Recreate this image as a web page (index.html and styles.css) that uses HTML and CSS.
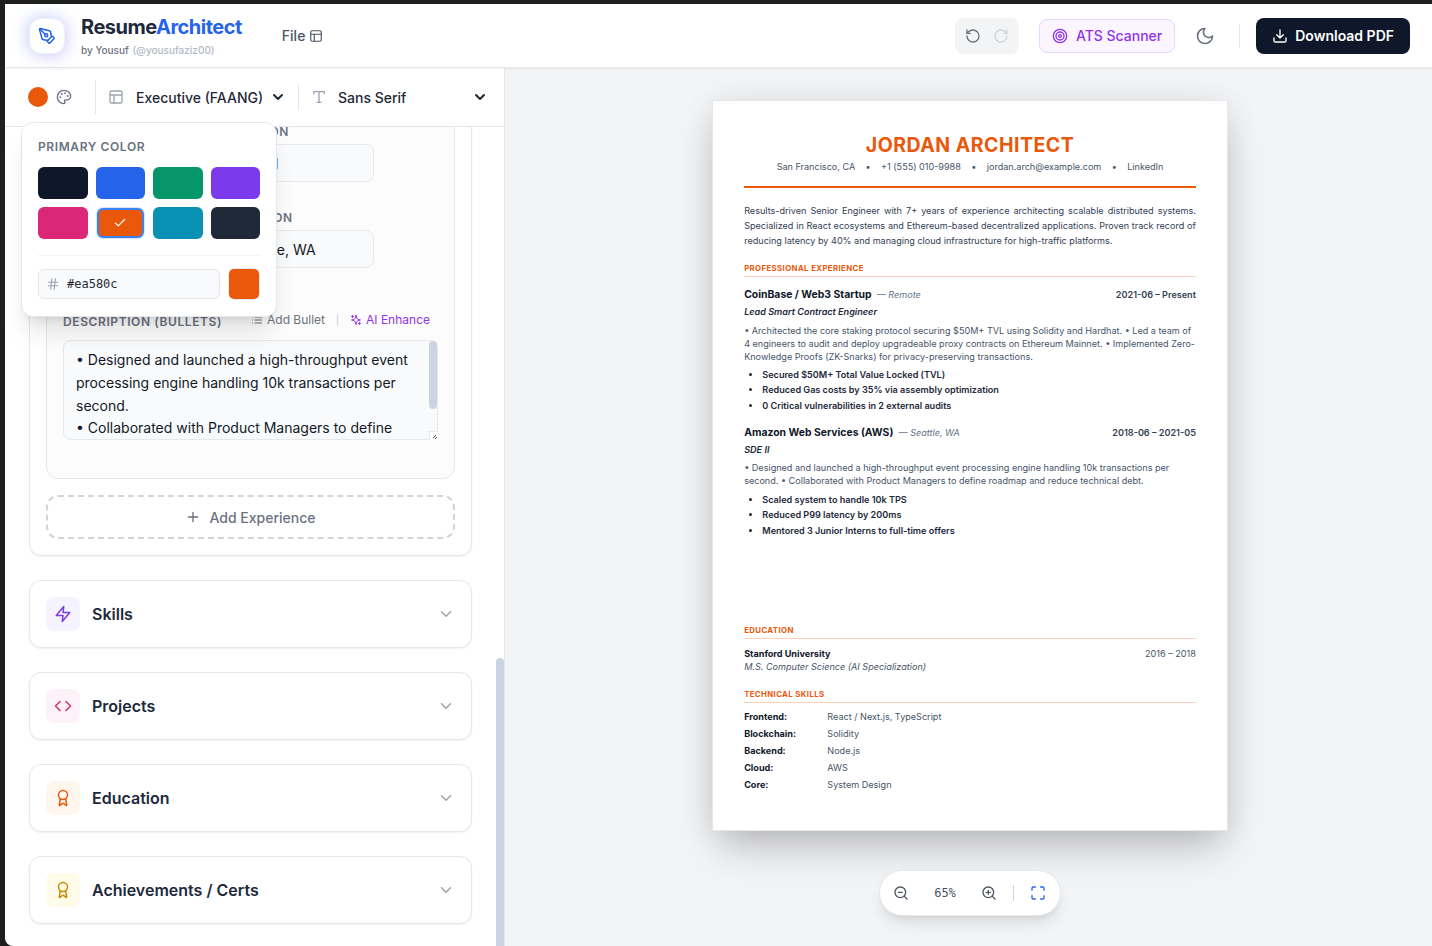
FILE: index.html
```html
<!DOCTYPE html>
<html lang="en">
<head>
<meta charset="utf-8">
<title>ResumeArchitect</title>
<meta name="viewport" content="width=device-width, initial-scale=1">
<link rel="stylesheet" href="styles.css">
</head>
<body>
<div class="app">
  <header class="topbar">
    <span class="logo"><svg class="icon i18" viewBox="0 0 24 24"><path d="M15.707 21.293a1 1 0 0 1-1.414 0l-1.586-1.586a1 1 0 0 1 0-1.414l5.586-5.586a1 1 0 0 1 1.414 0l1.586 1.586a1 1 0 0 1 0 1.414z"/><path d="m18 13-1.375-6.874a1 1 0 0 0-.746-.776L3.235 2.028a1 1 0 0 0-1.207 1.207L5.35 15.879a1 1 0 0 0 .776.746L13 18"/><path d="m2.3 2.3 7.286 7.286"/><circle cx="11" cy="11" r="2"/></svg></span>
    <div class="brand">
      <h1 class="brand-name">Resume<span>Architect</span></h1>
      <p class="brand-by">by Yousuf <a href="#author">(@yousufaziz00)</a></p>
    </div>
    <button class="file-menu" type="button">File <svg class="icon i14" viewBox="0 0 24 24"><rect x="3" y="3" width="18" height="18" rx="2"/><path d="M3 9h18M9 21V9"/></svg></button>
    <div class="actions">
      <div class="history">
        <button type="button" aria-label="Undo"><svg class="icon i16" viewBox="0 0 24 24"><path d="M3 12a9 9 0 1 0 9-9 9.75 9.75 0 0 0-6.74 2.74L3 8"/><path d="M3 3v5h5"/></svg></button>
        <button type="button" aria-label="Redo" disabled><svg class="icon i16" viewBox="0 0 24 24"><path d="M21 12a9 9 0 1 1-9-9c2.520 0 4.930 1 6.740 2.740L21 8"/><path d="M21 3v5h-5"/></svg></button>
      </div>
      <button class="ats" type="button"><svg class="icon i16" viewBox="0 0 24 24"><circle cx="12" cy="12" r="10"/><circle cx="12" cy="12" r="6"/><circle cx="12" cy="12" r="2"/></svg>ATS Scanner</button>
      <button class="theme" type="button" aria-label="Dark mode"><svg class="icon i20" viewBox="0 0 24 24"><path d="M12 3a6 6 0 0 0 9 9 9 9 0 1 1-9-9Z"/></svg></button>
      <span class="bar-rule"></span>
      <button class="download" type="button"><svg class="icon i16" viewBox="0 0 24 24"><path d="M21 15v4a2 2 0 0 1-2 2H5a2 2 0 0 1-2-2v-4"/><path d="m7 10 5 5 5-5M12 15V3"/></svg>Download PDF</button>
    </div>
  </header>

  <main class="workspace">
    <aside class="editor">
      <div class="toolbar">
        <div class="color-tool">
          <button class="color-button" type="button" aria-label="Theme color" aria-expanded="true"><span class="dot"></span><svg class="icon i16" viewBox="0 0 24 24"><circle cx="13.500" cy="6.500" r=".5"/><circle cx="17.500" cy="10.500" r=".5"/><circle cx="8.500" cy="7.500" r=".5"/><circle cx="6.500" cy="12.500" r=".5"/><path d="M12 2C6.500 2 2 6.500 2 12s4.500 10 10 10c.926 0 1.648-.746 1.648-1.688 0-.437-.18-.835-.437-1.125-.29-.289-.438-.652-.438-1.125a1.640 1.640 0 0 1 1.668-1.668h1.996c3.051 0 5.555-2.503 5.555-5.554C21.965 6.012 17.461 2 12 2z"/></svg></button>
          <div class="color-pop">
            <h2 class="caps">Primary Color</h2>
            <div class="swatches">
              <button type="button" class="sw navy" aria-label="Navy"></button>
              <button type="button" class="sw blue" aria-label="Blue"></button>
              <button type="button" class="sw green" aria-label="Green"></button>
              <button type="button" class="sw violet" aria-label="Violet"></button>
              <button type="button" class="sw pink" aria-label="Pink"></button>
              <button type="button" class="sw orange selected" aria-label="Orange" aria-pressed="true"><svg class="icon i14" viewBox="0 0 24 24"><path d="M20 6 9 17l-5-5"/></svg></button>
              <button type="button" class="sw cyan" aria-label="Cyan"></button>
              <button type="button" class="sw slate" aria-label="Slate"></button>
            </div>
            <div class="custom">
              <label class="hex"><svg class="icon i14" viewBox="0 0 24 24"><path d="M4 9h16M4 15h16M10 3 8 21M16 3l-2 18"/></svg><input type="text" value="#ea580c" aria-label="Hex color"></label>
              <input class="picker" type="color" value="#ea580c" aria-label="Pick color">
            </div>
          </div>
        </div>
        <span class="rule tall"></span>
        <label class="pick template"><svg class="icon i16 faint" viewBox="0 0 24 24"><rect x="3" y="3" width="18" height="18" rx="2"/><path d="M3 9h18M9 21V9"/></svg>
          <select aria-label="Template"><option>Executive (FAANG)</option></select>
          <svg class="icon caret" viewBox="0 0 10 10"><path d="m1 3 4 4 4-4"/></svg></label>
        <span class="rule"></span>
        <label class="pick font"><svg class="icon i16 faint" viewBox="0 0 24 24"><path d="M4 7V4h16v3M9 20h6M12 4v16"/></svg>
          <select aria-label="Font"><option>Sans Serif</option></select>
          <svg class="icon caret" viewBox="0 0 10 10"><path d="m1 3 4 4 4-4"/></svg></label>
      </div>

      <div class="scroller">
        <div class="sections">
          <section class="card open">
            <div class="entry">
              <div class="fields">
                <div class="field"><label class="caps" for="company">Company</label><input id="company" type="text" value="Amazon"></div>
                <div class="field"><label class="caps" for="position">Position</label><input id="position" type="text" value="SDE II"></div>
                <div class="field"><label class="caps" for="dates">Duration</label><input id="dates" type="text" value="2018-06"></div>
                <div class="field"><label class="caps" for="location">Location</label><input id="location" type="text" value="Seattle, WA"></div>
              </div>
              <div class="desc-head">
                <label class="caps" for="desc">Description (Bullets)</label>
                <div class="desc-tools">
                  <button type="button"><svg class="icon i12" viewBox="0 0 24 24"><path d="M8 6h13M8 12h13M8 18h13M3 6h.01M3 12h.01M3 18h.01"/></svg>Add Bullet</button>
                  <span class="tiny-rule"></span>
                  <button type="button" class="ai"><svg class="icon i12" viewBox="0 0 24 24"><path d="m12 3-1.912 5.813a2 2 0 0 1-1.275 1.275L3 12l5.813 1.912a2 2 0 0 1 1.275 1.275L12 21l1.912-5.813a2 2 0 0 1 1.275-1.275L21 12l-5.813-1.912a2 2 0 0 1-1.275-1.275L12 3ZM5 3v4M19 17v4M3 5h4M17 19h4"/></svg>AI Enhance</button>
                </div>
              </div>
              <div class="desc-box">
                <textarea id="desc">• Designed and launched a high-throughput event processing engine handling 10k transactions per second.
• Collaborated with Product Managers to define roadmap and reduce technical debt.</textarea>
                <span class="desc-thumb"></span>
                <svg class="grip" viewBox="0 0 9 9"><path d="M0 9V0h9" class="edge"/><path d="M4 7 7 4M6 8l2-2"/></svg>
              </div>
            </div>
            <button class="add" type="button"><svg class="icon i16" viewBox="0 0 24 24"><path d="M5 12h14M12 5v14"/></svg>Add Experience</button>
          </section>
          <button class="card row" type="button"><span class="tile t-violet"><svg class="icon i18" viewBox="0 0 24 24"><path d="M13 2 3 14h9l-1 8 10-12h-9l1-8z"/></svg></span><span class="row-title">Skills</span><svg class="icon i18 faint" viewBox="0 0 24 24"><path d="m6 9 6 6 6-6"/></svg></button>
          <button class="card row" type="button"><span class="tile t-pink"><svg class="icon i18" viewBox="0 0 24 24"><path d="m16 18 6-6-6-6M8 6l-6 6 6 6"/></svg></span><span class="row-title">Projects</span><svg class="icon i18 faint" viewBox="0 0 24 24"><path d="m6 9 6 6 6-6"/></svg></button>
          <button class="card row" type="button"><span class="tile t-orange"><svg class="icon i18" viewBox="0 0 24 24"><circle cx="12" cy="8" r="6"/><path d="m15.477 12.890 1.515 8.526a.5.5 0 0 1-.81.47l-3.580-2.687a1 1 0 0 0-1.197 0l-3.586 2.686a.5.5 0 0 1-.81-.469l1.514-8.526"/></svg></span><span class="row-title">Education</span><svg class="icon i18 faint" viewBox="0 0 24 24"><path d="m6 9 6 6 6-6"/></svg></button>
          <button class="card row" type="button"><span class="tile t-yellow"><svg class="icon i18" viewBox="0 0 24 24"><circle cx="12" cy="8" r="6"/><path d="m15.477 12.890 1.515 8.526a.5.5 0 0 1-.81.47l-3.580-2.687a1 1 0 0 0-1.197 0l-3.586 2.686a.5.5 0 0 1-.81-.469l1.514-8.526"/></svg></span><span class="row-title">Achievements / Certs</span><svg class="icon i18 faint" viewBox="0 0 24 24"><path d="m6 9 6 6 6-6"/></svg></button>
        </div>
        <div class="rail"><span class="thumb"></span></div>
      </div>
    </aside>

    <section class="preview">
      <article class="sheet">
        <header class="sheet-head">
          <h2>JORDAN ARCHITECT</h2>
          <p class="contact"><span>San Francisco, CA</span><span>•</span><span>+1 (555) 010-9988</span><span>•</span><span>jordan.arch@example.com</span><span>•</span><span>LinkedIn</span></p>
        </header>
        <p class="summary">Results-driven Senior Engineer with 7+ years of experience architecting scalable distributed systems. Specialized in React ecosystems and Ethereum-based decentralized applications. Proven track record of reducing latency by 40% and managing cloud infrastructure for high-traffic platforms.</p>

        <section class="part">
          <h3>PROFESSIONAL EXPERIENCE</h3>
          <div class="job">
            <div class="job-line"><strong>CoinBase / Web3 Startup</strong><em>— Remote</em><span class="when">2021-06 – Present</span></div>
            <p class="role">Lead Smart Contract Engineer</p>
            <p class="text">• Architected the core staking protocol securing $50M+ TVL using Solidity and Hardhat. • Led a team of 4 engineers to audit and deploy upgradeable proxy contracts on Ethereum Mainnet. • Implemented Zero-Knowledge Proofs (ZK-Snarks) for privacy-preserving transactions.</p>
            <ul><li>Secured $50M+ Total Value Locked (TVL)</li><li>Reduced Gas costs by 35% via assembly optimization</li><li>0 Critical vulnerabilities in 2 external audits</li></ul>
          </div>
          <div class="job">
            <div class="job-line"><strong>Amazon Web Services (AWS)</strong><em>— Seattle, WA</em><span class="when">2018-06 – 2021-05</span></div>
            <p class="role">SDE II</p>
            <p class="text">• Designed and launched a high-throughput event processing engine handling 10k transactions per second. • Collaborated with Product Managers to define roadmap and reduce technical debt.</p>
            <ul><li>Scaled system to handle 10k TPS</li><li>Reduced P99 latency by 200ms</li><li>Mentored 3 Junior Interns to full-time offers</li></ul>
          </div>
        </section>

        <section class="part after-break">
          <h3>EDUCATION</h3>
          <div class="school"><strong>Stanford University</strong><span>2016 – 2018</span></div>
          <p class="degree">M.S. Computer Science (AI Specialization)</p>
        </section>

        <section class="part">
          <h3>TECHNICAL SKILLS</h3>
          <dl class="skills">
            <dt>Frontend:</dt><dd>React / Next.js, TypeScript</dd>
            <dt>Blockchain:</dt><dd>Solidity</dd>
            <dt>Backend:</dt><dd>Node.js</dd>
            <dt>Cloud:</dt><dd>AWS</dd>
            <dt>Core:</dt><dd>System Design</dd>
          </dl>
        </section>
      </article>

      <div class="zoombar">
        <button type="button" aria-label="Zoom out"><svg class="icon i16" viewBox="0 0 24 24"><circle cx="11" cy="11" r="8"/><path d="m21 21-4.350-4.350M8 11h6"/></svg></button>
        <span class="level">65%</span>
        <button type="button" aria-label="Zoom in"><svg class="icon i16" viewBox="0 0 24 24"><circle cx="11" cy="11" r="8"/><path d="m21 21-4.350-4.350M8 11h6M11 8v6"/></svg></button>
        <span class="zoom-rule"></span>
        <button type="button" class="fit" aria-label="Fit to screen"><svg class="icon i16" viewBox="0 0 24 24"><path d="M8 3H5a2 2 0 0 0-2 2v3M21 8V5a2 2 0 0 0-2-2h-3M3 16v3a2 2 0 0 0 2 2h3M16 21h3a2 2 0 0 0 2-2v-3"/></svg></button>
      </div>
    </section>
  </main>
</div>
</body>
</html>
```
FILE: styles.css
```css
* { box-sizing: border-box; }
body {
  margin: 0;
  height: 100vh;
  padding: 4px 0 0 5px;
  background: #1e201e;
  color: #1e293b;
  font-family: Inter, "Liberation Sans", sans-serif;
  font-size: 14px;
}
h1, h2, h3, p, ul, dl, dd { margin: 0; padding: 0; }
button, input, select, textarea { font: inherit; color: inherit; }
button { padding: 0; border: 0; background: none; cursor: pointer; }
a { color: inherit; text-decoration: none; }

.icon { flex: none; fill: none; stroke: currentColor; stroke-width: 2; stroke-linecap: round; stroke-linejoin: round; }
.i12 { width: 12px; height: 12px; }
.i14 { width: 14px; height: 14px; }
.i16 { width: 16px; height: 16px; }
.i18 { width: 18px; height: 18px; }
.i20 { width: 20px; height: 20px; }
.faint { color: #9ca3af; }
.caps { font-size: 12px; line-height: 16px; font-weight: 600; letter-spacing: 0.6px; text-transform: uppercase; color: #6b7280; }

.app { display: flex; flex-direction: column; height: 100%; overflow: hidden; background: #fff; border-bottom-left-radius: 8px; }

/* Top bar */
.topbar { position: relative; z-index: 3; flex: none; display: flex; align-items: center; height: 64px; padding: 0 22px 0 24px; background: #fff; border-bottom: 1px solid #e5e7eb; box-shadow: 0 1px 2px rgba(0, 0, 0, 0.05); }
.logo { display: grid; place-items: center; width: 36px; height: 36px; border: 1px solid #eef0f4; border-radius: 12px; background: #fff; color: #2563eb; box-shadow: -3px -2px 16px rgba(59, 130, 246, 0.22), 3px 3px 16px rgba(124, 58, 237, 0.18); }
.brand { margin-left: 16px; }
.brand-name { font-size: 20px; line-height: 26px; font-weight: 700; letter-spacing: -0.5px; }
.brand-name span { color: #2563eb; }
.brand-by { margin-top: 2px; font-size: 10px; line-height: 16px; font-weight: 500; color: #6b7280; }
.brand-by a { margin-left: 1px; color: #b3b9c4; }
.file-menu { display: flex; align-items: center; gap: 4px; margin-left: 40px; font-weight: 500; color: #4b5563; }
.actions { display: flex; align-items: center; margin-left: auto; }
.history { display: flex; padding: 4px; border-radius: 8px; background: #f3f4f6; color: #6b7280; }
.history button { display: grid; place-items: center; width: 28px; height: 28px; }
.history button:disabled { color: #d1d5db; }
.ats { display: flex; align-items: center; gap: 8px; height: 34px; margin-left: 20px; padding: 0 12px; border: 1px solid #e9d5ff; border-radius: 8px; background: #faf5ff; font-weight: 500; color: #9333ea; }
.theme { display: grid; place-items: center; width: 36px; height: 36px; margin-left: 12px; color: #6b7280; }
.bar-rule { width: 1px; height: 24px; margin: 0 16px; background: #e5e7eb; }
.download { display: flex; align-items: center; gap: 7px; height: 36px; padding: 0 16px; border-radius: 8px; background: #0f172a; font-weight: 600; color: #fff; }

.workspace { flex: 1; min-height: 0; display: flex; }

/* Editor column */
.editor { flex: none; display: flex; flex-direction: column; width: 500px; border-right: 1px solid #e5e7eb; }
.toolbar { position: relative; z-index: 2; flex: none; display: flex; align-items: center; height: 59px; padding: 0 16px 0 23px; border-bottom: 1px solid #e5e7eb; background: #fff; }
.color-button { display: flex; align-items: center; gap: 8px; color: #6b7280; }
.dot { width: 20px; height: 20px; border-radius: 50%; background: #ea580c; }
.rule { flex: none; width: 1px; height: 26px; margin: 0 12px; background: #e5e7eb; }
.rule.tall { height: 34px; margin-left: 23px; }
.pick { position: relative; display: flex; align-items: center; gap: 12px; font-weight: 500; color: #1f2937; }
.pick select { appearance: none; width: 100%; padding: 0 24px 0 0; border: 0; background: none; outline: 0; cursor: pointer; }
.template { width: 178px; }
.font { flex: 1; gap: 11px; }
.caret { position: absolute; right: 3px; top: 50%; width: 10px; height: 10px; margin-top: -5px; pointer-events: none; }

.color-pop { position: absolute; top: 54px; left: 16px; width: 256px; padding: 16px; border: 1px solid #e5e7eb; border-radius: 12px; background: #fff; box-shadow: 0 20px 25px -5px rgba(0, 0, 0, 0.1), 0 8px 10px -6px rgba(0, 0, 0, 0.1); }
.swatches { display: grid; grid-template-columns: repeat(4, 1fr); gap: 8px; margin-top: 12px; }
.sw { height: 32px; border-radius: 6px; }
.navy { background: #0f172a; }
.blue { background: #2563eb; }
.green { background: #059669; }
.violet { background: #7c3aed; }
.pink { background: #db2777; }
.orange { background: #ea580c; }
.cyan { background: #0891b2; }
.slate { background: #1f2937; }
.sw.selected { display: grid; place-items: center; height: 30px; margin: 1px; border: 2px solid #3b82f6; color: #fff; box-shadow: 0 0 0 1px #dbe6fb; }
.custom { display: flex; align-items: center; gap: 8px; margin-top: 16px; padding-top: 12px; border-top: 1px solid #f3f4f6; }
.hex { flex: 1; min-width: 0; display: flex; align-items: center; gap: 7px; height: 30px; padding: 0 7px; border: 1px solid #e5e7eb; border-radius: 6px; background: #f9fafb; color: #9ca3af; }
.hex input { flex: 1; min-width: 0; padding: 0; border: 0; outline: 0; background: none; font-family: "DejaVu Sans Mono", monospace; font-size: 12px; color: #1f2937; }
.picker { flex: none; width: 32px; height: 32px; padding: 0; border: 1px solid #e5e7eb; border-radius: 6px; background: #ea580c; overflow: hidden; }
.picker::-webkit-color-swatch-wrapper { padding: 0; }
.picker::-webkit-color-swatch { border: 0; }

.scroller { flex: 1; min-height: 0; display: flex; }
.sections { flex: 1; min-width: 0; display: flex; flex-direction: column; justify-content: flex-end; gap: 24px; padding: 0 24px 22px; overflow: hidden; }
.rail { display: flex; flex-direction: column; justify-content: flex-end; width: 8px; }
.thumb { height: 35.2%; border-radius: 4px 4px 0 0; background: #cbd5e1; }
.card { flex: none; width: 100%; border: 1px solid #e5e7eb; border-radius: 12px; background: #fff; box-shadow: 0 1px 2px rgba(0, 0, 0, 0.06); }
.open { padding: 16px; }
.entry { padding: 16px 16px 38px; border: 1px solid #e5e7eb; border-radius: 12px; background: #fcfcfc; }
.fields { display: grid; grid-template-columns: 1fr 1fr; gap: 28px 16px; margin-right: 64px; }
.field { display: flex; flex-direction: column; gap: 4px; min-width: 0; }
.field input { width: 100%; height: 38px; padding: 0 12px; border: 1px solid #e5e7eb; border-radius: 8px; background: #f9fafb; color: #111827; }
.desc-head { display: flex; align-items: flex-end; justify-content: space-between; margin: 44px 0 10px; padding-right: 8px; }
.desc-tools { display: flex; align-items: center; gap: 12px; padding-bottom: 2px; font-size: 12px; line-height: 16px; color: #6b7280; }
.desc-tools button { display: flex; align-items: center; gap: 4px; }
.desc-tools .ai { color: #9333ea; }
.tiny-rule { width: 1px; height: 12px; background: #d1d5db; }
.desc-box { position: relative; height: 100px; }
.desc-box textarea { display: block; width: 100%; height: 100%; padding: 8px 28px 8px 12px; border: 1px solid #e5e7eb; border-radius: 8px; background: #f9fafb; color: #111827; line-height: 1.625; resize: none; overflow: hidden; outline: 0; }
.desc-thumb { position: absolute; top: 1px; right: 1px; width: 8px; height: 68px; border-radius: 4px; background: #cbd5e1; }
.grip { position: absolute; right: 0; bottom: 0; width: 9px; height: 9px; background: #fff; fill: none; stroke: #4b5563; }
.grip .edge { stroke: #d1d5db; }
.add { display: flex; align-items: center; justify-content: center; gap: 8px; width: 100%; height: 44px; margin-top: 16px; border: 2px dashed #d1d5db; border-radius: 12px; font-weight: 500; color: #6b7280; }
.row { display: flex; align-items: center; gap: 12px; height: 68px; padding: 0 16px; text-align: left; }
.tile { display: grid; place-items: center; width: 34px; height: 34px; border-radius: 8px; }
.t-violet { background: #f5f3ff; color: #7c3aed; }
.t-pink { background: #fdf2f8; color: #db2777; }
.t-orange { background: #fff7ed; color: #ea580c; }
.t-yellow { background: #fefce8; color: #ca8a04; }
.row-title { flex: 1; font-size: 16px; line-height: 24px; font-weight: 600; }

/* Preview: an A4 sheet shown at the zoom level of the toolbar */
.preview { position: relative; flex: 1; display: flex; flex-direction: column; align-items: center; padding: 32px 0 0 3px; background: #f3f4f6; overflow: hidden; }
.sheet { flex: none; zoom: 0.65; width: 794px; min-height: 1125px; padding: 48px; border: 1px solid #e5e7eb; background: #fff; box-shadow: 0 30px 60px -10px rgba(0, 0, 0, 0.25), 0 0 50px rgba(0, 0, 0, 0.06); line-height: 20px; color: #475569; }
.sheet-head { margin-bottom: 24px; padding-bottom: 20px; border-bottom: 4px solid #ea580c; text-align: center; }
.sheet-head h2 { font-size: 30px; line-height: 40px; font-weight: 700; letter-spacing: 0.025em; color: #ea580c; }
.contact { display: flex; justify-content: center; gap: 16px; margin-top: 3px; }
.summary { line-height: 23px; text-align: justify; color: #334155; }
.part { margin-top: 22px; }
.part h3 { padding-bottom: 4px; border-bottom: 2px solid #fbcfb8; font-size: 12px; line-height: 16px; font-weight: 700; letter-spacing: 0.6px; color: #ea580c; }
.job { margin-top: 16px; }
.job + .job { margin-top: 20px; }
.job-line { display: flex; align-items: baseline; gap: 8px; line-height: 24px; }
.job-line strong { font-size: 16px; font-weight: 700; color: #0f172a; }
.job-line em { color: #64748b; }
.when { margin-left: auto; font-weight: 600; color: #334155; }
.role { margin-top: 4px; font-style: italic; font-weight: 600; color: #1e293b; }
.text { margin-top: 8px; }
.job ul { display: flex; flex-direction: column; gap: 4px; margin-top: 8px; padding-left: 28px; font-weight: 600; color: #1e293b; }
.after-break { margin-top: 136px; }
.after-break + .part { margin-top: 24px; }
.school { display: flex; justify-content: space-between; margin-top: 12px; }
.school strong, .skills dt { font-weight: 700; color: #0f172a; }
.degree { font-style: italic; }
.skills { display: grid; grid-template-columns: 116px 1fr; gap: 6px 12px; margin-top: 12px; }

.zoombar { position: absolute; bottom: 30px; left: 50%; display: flex; align-items: center; justify-content: center; width: 182px; height: 46px; margin-left: -90px; border: 1px solid #e5e7eb; border-radius: 23px; background: #fff; color: #4b5563; box-shadow: 0 10px 15px -3px rgba(0, 0, 0, 0.1), 0 4px 6px -4px rgba(0, 0, 0, 0.1); }
.zoombar button { display: grid; }
.level { margin: 0 25px; font-family: "DejaVu Sans Mono", monospace; font-size: 12px; }
.zoom-rule { width: 1px; height: 16px; margin: 0 16px; background: #d1d5db; }
.fit { color: #2563eb; }
```
